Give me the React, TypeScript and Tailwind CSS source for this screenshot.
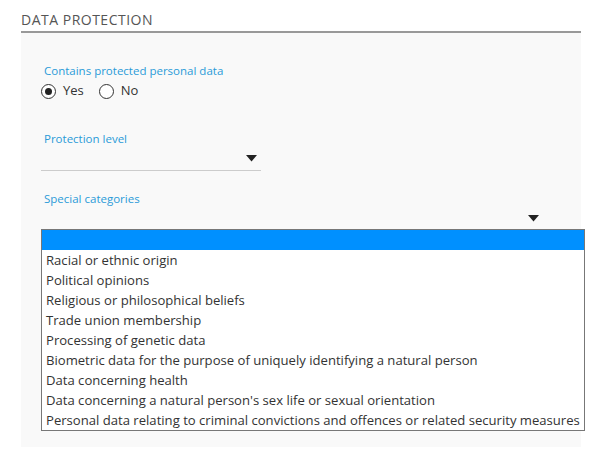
import React, { useState } from 'react';

const categories = [
  '',
  'Racial or ethnic origin',
  'Political opinions',
  'Religious or philosophical beliefs',
  'Trade union membership',
  'Processing of genetic data',
  'Biometric data for the purpose of uniquely identifying a natural person',
  'Data concerning health',
  "Data concerning a natural person's sex life or sexual orientation",
  'Personal data relating to criminal convictions and offences or related security measures',
];

const Caret = () => (
  <svg width="11" height="7" viewBox="0 0 11 7" className="block">
    <path d="M0 0h11L5.5 6.5z" fill="#222" />
  </svg>
);

const Radio = ({ checked, label, onClick }: { checked: boolean; label: string; onClick: () => void }) => (
  <button type="button" onClick={onClick} className="flex items-center gap-[7px] cursor-pointer">
    <span className="w-[15px] h-[15px] rounded-full border border-[#333] flex items-center justify-center bg-white">
      {checked && <span className="w-[7px] h-[7px] rounded-full bg-[#222]" />}
    </span>
    <span className="text-[13px] text-[#333]">{label}</span>
  </button>
);

export default function App() {
  const [hasData, setHasData] = useState(true);
  const [selected, setSelected] = useState(0);

  return (
    <div className="w-[603px] h-[463px] bg-white font-['Open_Sans',sans-serif] pt-[11px] pl-[21px]">
      <div className="w-[560px]">
        <h3 className="text-[14px] tracking-[0.5px] text-[#555] leading-[18px] pb-[2px] border-b-2 border-[#999]">DATA PROTECTION</h3>
        <div className="bg-[#f9f9f9] h-[414px] pl-[20px] pt-[30px]">
          <div className="text-[11.5px] text-[#2a9bd8] leading-[16px] pl-[3px]">Contains protected personal data</div>
          <div className="flex gap-[15px] mt-[2px] h-[20px] items-center">
            <Radio checked={hasData} label="Yes" onClick={() => setHasData(true)} />
            <Radio checked={!hasData} label="No" onClick={() => setHasData(false)} />
          </div>

          <div className="mt-[30px] text-[11.5px] text-[#2a9bd8] leading-[16px] pl-[3px]">Protection level</div>
          <div className="w-[220px] h-[24px] border-b border-[#ccc] flex items-center justify-end pr-[4px]">
            <Caret />
          </div>

          <div className="mt-[20px] text-[11.5px] text-[#2a9bd8] leading-[16px] pl-[3px]">Special categories</div>
          <div className="w-[498px] h-[22px] flex items-center justify-end">
            <Caret />
          </div>
          <div className="w-[544px] border border-[#777] bg-white relative">
            {categories.map((c, i) => (
              <div
                key={i}
                onClick={() => setSelected(i)}
                className={
                  'h-[20px] leading-[20px] pl-[4px] text-[13.1px] whitespace-nowrap cursor-default ' +
                  (i === selected ? 'bg-[#0090ff] text-white' : 'text-[#333]')
                }
              >
                {c}
              </div>
            ))}
          </div>
        </div>
      </div>
    </div>
  );
}
